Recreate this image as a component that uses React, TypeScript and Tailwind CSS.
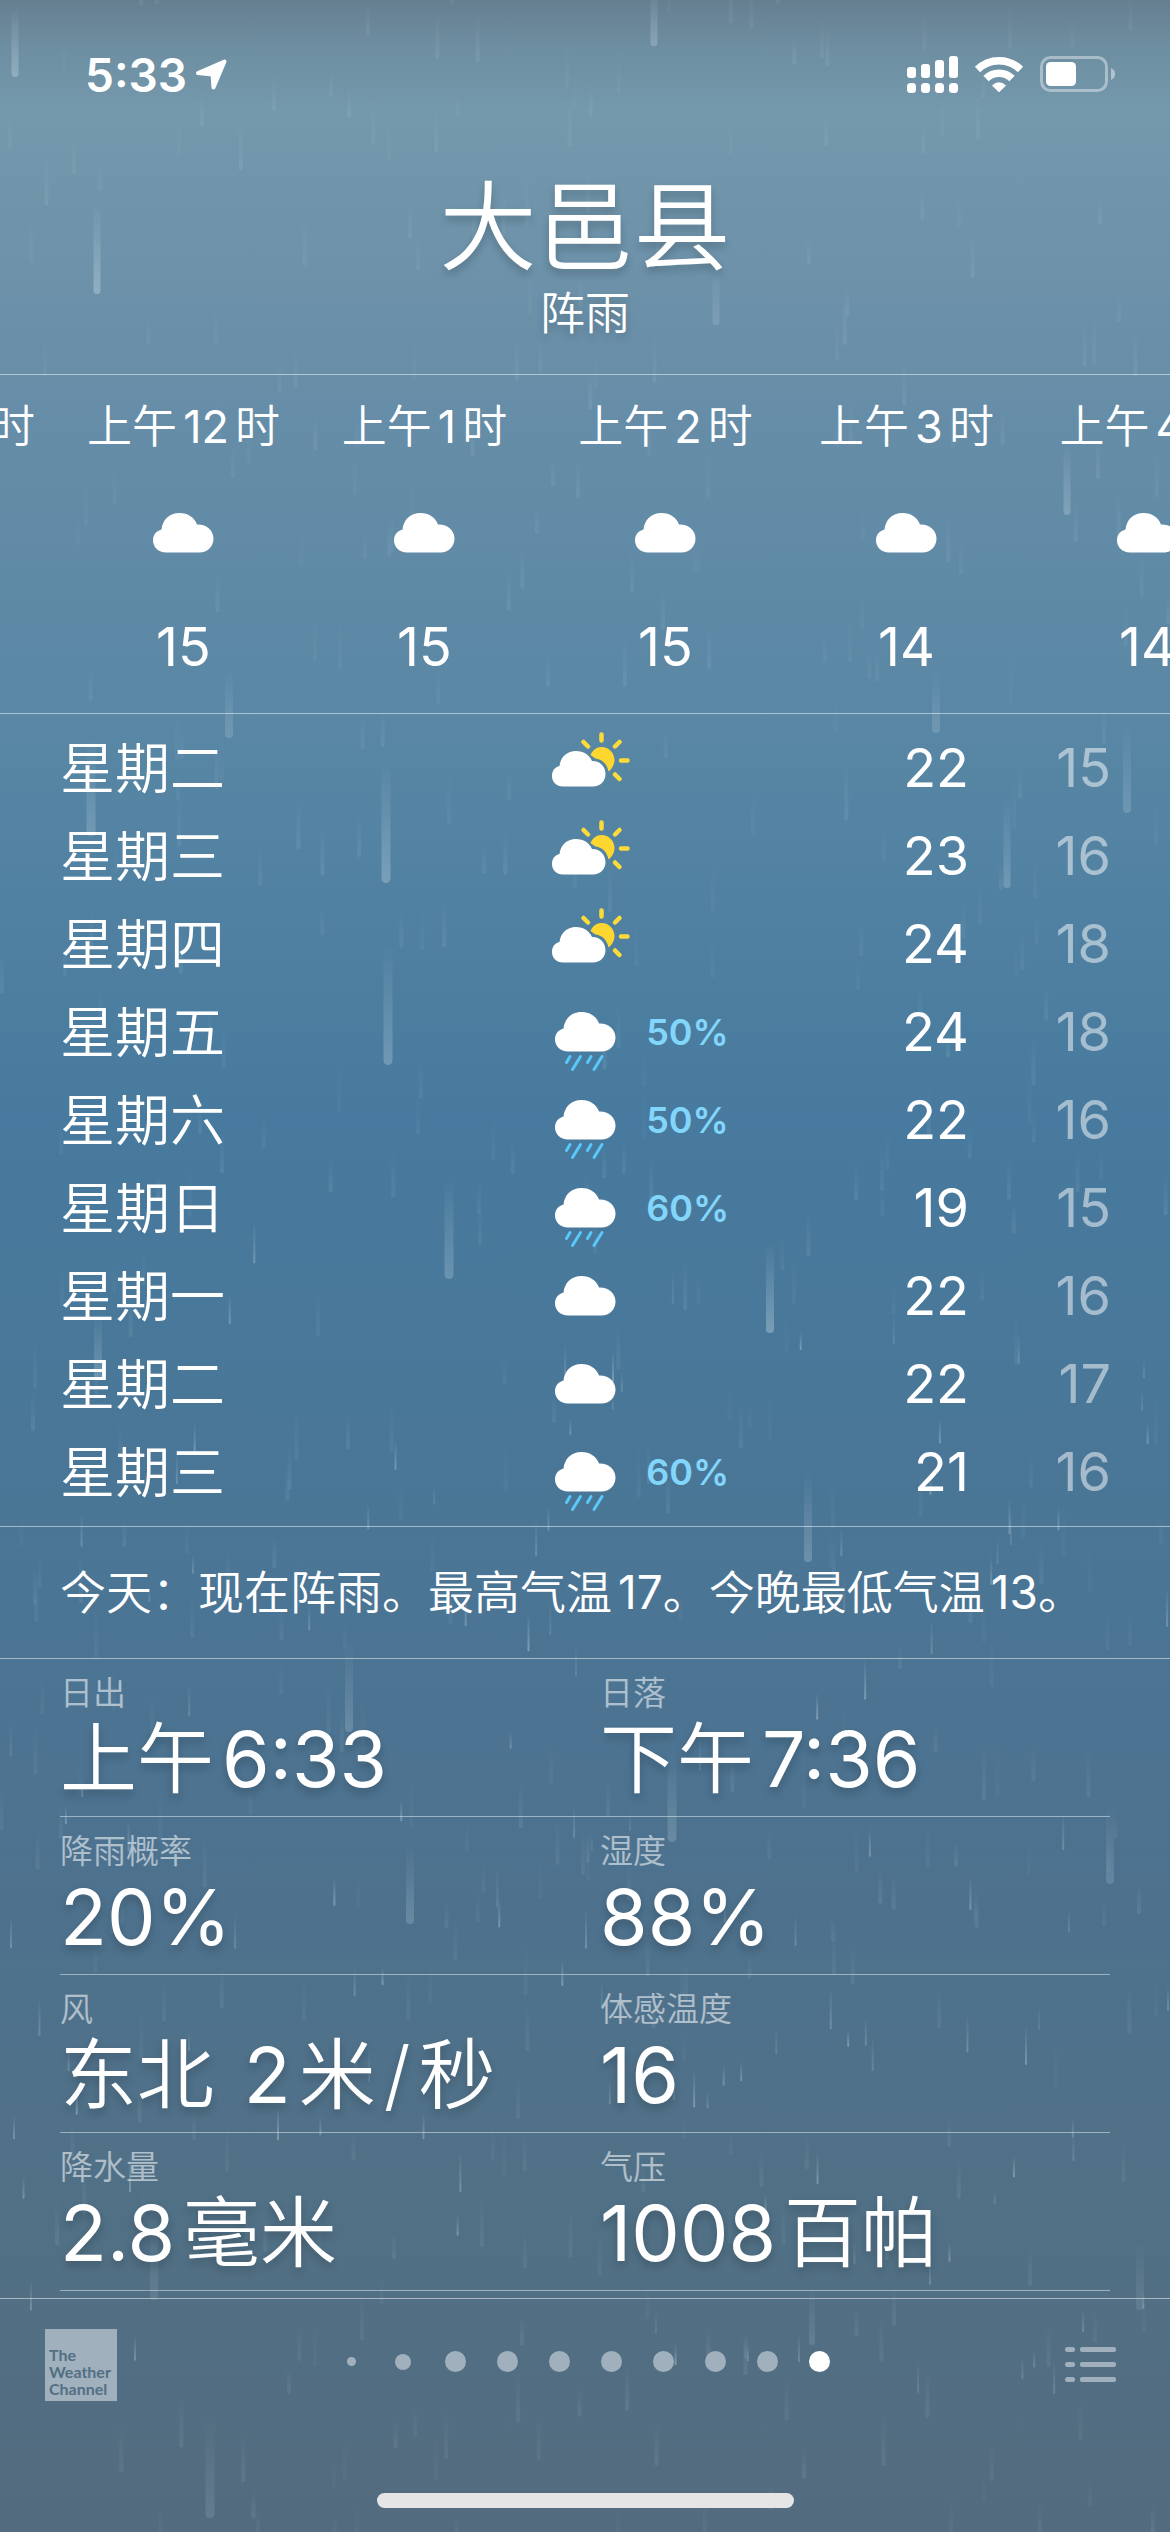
import React from "react";

type Sky = "partly" | "rain" | "cloud";

const hours = [
  { time: ["上午", "12", "时"], temp: "15" },
  { time: ["上午", "1", "时"], temp: "15" },
  { time: ["上午", "2", "时"], temp: "15" },
  { time: ["上午", "3", "时"], temp: "14" },
  { time: ["上午", "4", "时"], temp: "14" },
];

const days: { day: string; sky: Sky; chance?: string; high: number; low: number }[] = [
  { day: "星期二", sky: "partly", high: 22, low: 15 },
  { day: "星期三", sky: "partly", high: 23, low: 16 },
  { day: "星期四", sky: "partly", high: 24, low: 18 },
  { day: "星期五", sky: "rain", chance: "50%", high: 24, low: 18 },
  { day: "星期六", sky: "rain", chance: "50%", high: 22, low: 16 },
  { day: "星期日", sky: "rain", chance: "60%", high: 19, low: 15 },
  { day: "星期一", sky: "cloud", high: 22, low: 16 },
  { day: "星期二", sky: "cloud", high: 22, low: 17 },
  { day: "星期三", sky: "rain", chance: "60%", high: 21, low: 16 },
];

const details: { label: string; value: string[] }[][] = [
  [
    { label: "日出", value: ["上午", "6:33"] },
    { label: "日落", value: ["下午", "7:36"] },
  ],
  [
    { label: "降雨概率", value: ["20%"] },
    { label: "湿度", value: ["88%"] },
  ],
  [
    { label: "风", value: ["东北 ", "2", "米", "/", "秒"] },
    { label: "体感温度", value: ["16"] },
  ],
  [
    { label: "降水量", value: ["2.8", "毫米"] },
    { label: "气压", value: ["1008", "百帕"] },
  ],
];

/* Numerals carry a slightly heavier weight than the Chinese text beside them. */
function Parts({ items }: { items: string[] }) {
  return (
    <>
      {items.map((t) => (
        <span key={t} className={/[0-9]/.test(t) ? "font-normal" : "font-[350]"}>
          {t}
        </span>
      ))}
    </>
  );
}

const CLOUD =
  "M13 39.500C5.500 39.500 0 34 0 27.500C0 21.500 3.500 18 8.500 16.500C9.500 7 16 0 26.500 0C35 0 41.500 4.500 44 11.500C53 11 60.500 17 60.500 25.500C60.500 33.500 54.500 39.500 46.500 39.500Z";

function CloudIcon() {
  return (
    <svg viewBox="0 0 61 40" className="h-10 w-[61px]" aria-hidden="true">
      <path d={CLOUD} fill="#fff" />
    </svg>
  );
}

function RainIcon() {
  return (
    <svg viewBox="0 0 61 60" className="h-[60px] w-[61px]" aria-hidden="true">
      <path d={CLOUD} fill="#fff" />
      <g stroke="#5ac8fa" strokeWidth="3" strokeLinecap="round">
        <path d="M15 44.500L11.500 50.500M25.500 44.500L17.500 57.500M36 44.500L32.500 50.500M47 44.500L39 57.500" />
      </g>
    </svg>
  );
}

function PartlyIcon() {
  return (
    <svg viewBox="0 0 78 56" className="h-14 w-[78px]" aria-hidden="true">
      <path
        d="M38.500 23C40.500 18 44.500 15 49.500 15C57 15 62.500 21 62.500 28C62.500 32.500 60 37 56.500 39.500C55 32 50.500 27.500 43.500 26.500C42 25.500 40.500 24.500 38.500 23Z"
        fill="#fdd62f"
      />
      <g stroke="#fbdb3a" strokeWidth="4.500" strokeLinecap="round">
        <path d="M49.500 2.500V8.500M31.500 10L36 14.500M67.500 10L63 14.500M69 28.500H75.500M63 42.500L67.500 47" />
      </g>
      <path
        d="M11 54.500C4.500 54.500 0 50 0 44C0 38.500 3 35 7.500 34C8.500 25.500 14.500 19 24 19C31.500 19 37.500 23 40 29C47.500 28.500 53.500 34.500 53.500 42C53.500 49.500 48 54.500 41 54.500Z"
        fill="#fff"
      />
    </svg>
  );
}

const skyIcon: Record<Sky, React.ReactNode> = {
  partly: <PartlyIcon />,
  rain: <RainIcon />,
  cloud: <CloudIcon />,
};

/* Large foreground drops: x, bottom edge, length, width, opacity. */
const bigDrops: number[][] = [
  [15, 77, 70, 7, 0.34],
  [654, 46, 60, 7, 0.28],
  [97, 294, 90, 7, 0.38],
  [716, 325, 60, 7, 0.18],
  [1067, 515, 70, 7, 0.28],
  [229, 738, 70, 8, 0.2],
  [936, 733, 60, 8, 0.2],
  [91, 836, 100, 9, 0.24],
  [386, 883, 120, 9, 0.32],
  [1127, 813, 90, 8, 0.2],
  [1007, 888, 90, 7, 0.24],
  [388, 1065, 120, 9, 0.28],
  [449, 1279, 100, 9, 0.26],
  [770, 1333, 90, 8, 0.36],
  [98, 1380, 70, 8, 0.26],
  [808, 1562, 90, 8, 0.26],
  [349, 1732, 90, 8, 0.22],
  [672, 1842, 90, 9, 0.22],
  [410, 1924, 80, 8, 0.22],
  [1110, 1884, 80, 8, 0.18],
  [154, 2300, 90, 8, 0.12],
  [812, 2345, 60, 6, 0.14],
  [1140, 2310, 70, 8, 0.12],
  [210, 2518, 100, 9, 0.14],
];

function makeDrops() {
  let seed = 20417;
  const rnd = () => {
    seed = (seed * 16807) % 2147483647;
    return seed / 2147483647;
  };
  const out: number[][] = [];
  for (let i = 0; i < 460; i++) {
    out.push([rnd() * 1170, rnd() * 2560, 26 + rnd() * 28, 4, 0.04 + rnd() * 0.07]);
  }
  for (let i = 0; i < 120; i++) {
    const y = 1250 + Math.pow(rnd(), 0.8) * 1150;
    out.push([rnd() * 1170, y, 16 + rnd() * 26, 2, 0.14 + rnd() * 0.26]);
  }
  return out;
}
const smallDrops = makeDrops();

function Rain() {
  return (
    <svg
      className="pointer-events-none absolute inset-0 h-full w-full"
      viewBox="0 0 1170 2532"
      preserveAspectRatio="xMidYMin slice"
      aria-hidden="true"
    >
      <defs>
        <linearGradient id="drop" x1="0" y1="0" x2="0" y2="1">
          <stop offset="0" stopColor="#cfe0ea" stopOpacity="0" />
          <stop offset="1" stopColor="#cfe0ea" stopOpacity="1" />
        </linearGradient>
      </defs>
      {[...smallDrops, ...bigDrops].map(([x, y, len, w, o], i) => (
        <rect
          key={i}
          x={x - w / 2}
          y={y - len}
          width={w}
          height={len}
          rx={w / 2}
          fill="url(#drop)"
          opacity={o}
        />
      ))}
    </svg>
  );
}

function StatusBar() {
  return (
    <div className="flex h-[150px] items-center justify-between pr-[54px] pl-[85px]">
      <div className="flex items-center gap-2">
        <span className="text-[46px] leading-none font-semibold">5:33</span>
        <svg viewBox="0 0 32 32" className="h-8 w-8" aria-hidden="true">
          <path
            d="M29.500 2.500L18.500 28.500L17.500 15.500L3 14Z"
            fill="#fff"
            stroke="#fff"
            strokeWidth="4"
            strokeLinejoin="round"
          />
        </svg>
      </div>
      <div className="flex items-center gap-4">
        <svg viewBox="0 0 51 38" className="h-[38px] w-[51px]" fill="#fff" aria-hidden="true">
          <rect x="0" y="11" width="9" height="11" rx="3" />
          <rect x="14" y="8" width="9" height="14" rx="3" />
          <rect x="28" y="4" width="9" height="18" rx="3" />
          <rect x="42" y="0" width="9" height="22" rx="3" />
          <rect x="0" y="27" width="9" height="10" rx="3.500" />
          <rect x="14" y="27" width="9" height="10" rx="3.500" />
          <rect x="28" y="27" width="9" height="10" rx="3.500" />
          <rect x="42" y="27" width="9" height="10" rx="3.500" />
        </svg>
        <svg viewBox="0 0 50 38" className="h-[38px] w-[50px]" aria-hidden="true">
          <g fill="none" stroke="#fff" strokeWidth="7.500">
            <path d="M3.500 13.500A30.500 30.500 0 0 1 46.500 13.500" />
            <path d="M12 22.500A18.500 18.500 0 0 1 38 22.500" />
          </g>
          <path d="M18 29.500Q25 23 32 29.500L25.700 35.800Q25 36.500 24.300 35.800Z" fill="#fff" />
        </svg>
        <svg viewBox="0 0 76 38" className="h-[38px] w-[76px]" aria-hidden="true">
          <rect x="1.500" y="1.500" width="65" height="33" rx="9" fill="none" stroke="#fff" strokeOpacity="0.400" strokeWidth="3" />
          <rect x="6" y="6" width="30" height="24" rx="4.500" fill="#fff" />
          <path d="M71 12C76.500 14.500 76.500 21.500 71 24Z" fill="#fff" fillOpacity="0.450" />
        </svg>
      </div>
    </div>
  );
}

function Header() {
  return (
    <header className="flex flex-col items-center pt-[17px] pb-8 text-shadow-[0_5px_8px_rgb(0_0_0/0.2)]">
      <h1 className="text-[97px] leading-[119px] font-[350]">大邑县</h1>
      <p className="text-[45px] leading-[56px] font-[350]">阵雨</p>
    </header>
  );
}

function Hourly() {
  return (
    <section className="h-[340px] overflow-hidden border-y border-white/50">
      <ul className="flex">
        <li className="flex w-[63px] shrink-0 justify-end pt-[22px] pr-7 text-[45px] leading-[60px] font-[350]">时</li>
        {hours.map((h, i) => (
          <li key={i} className="flex w-[241px] shrink-0 flex-col items-center pt-[22px]">
            <span className="flex gap-1.5 text-[45px] leading-[60px] whitespace-nowrap">
              <Parts items={h.time} />
            </span>
            <span className="mt-[56px] flex h-10">
              <CloudIcon />
            </span>
            <span className="mt-[62px] text-[54px] leading-[64px]">{h.temp}</span>
          </li>
        ))}
      </ul>
    </section>
  );
}

function Daily() {
  return (
    <div className="py-2.5">
      <table className="w-full table-fixed border-collapse">
        <tbody>
          {days.map((d, i) => (
            <tr key={i} className="h-[88px] leading-[88px]">
              <th scope="row" className="w-[46%] pl-[60px] text-left text-[55px] font-[350]">
                {d.day}
              </th>
              <td className="w-[28%]">
                <div className="flex h-[88px] items-center">
                  <span className="flex h-full w-[92px] items-start">
                    <span className={d.sky === "partly" ? "mt-2 ml-[14px]" : "mt-6 ml-[17px]"}>
                      {skyIcon[d.sky]}
                    </span>
                  </span>
                  {d.chance && <span className="ml-4 text-[36px] font-semibold text-[#82d6fb]">{d.chance}</span>}
                </div>
              </td>
              <td className="text-right text-[54px]">{d.high}</td>
              <td className="w-[201px] pr-[59px] text-right text-[54px] text-white/50">{d.low}</td>
            </tr>
          ))}
        </tbody>
      </table>
    </div>
  );
}

function Summary() {
  return (
    <p className="flex h-[133px] items-center border-y border-white/50 px-[60px] text-[46px] font-[350] whitespace-nowrap">
      今天：现在阵雨。最高气温<span className="ml-1.5 font-normal">17</span>。今晚最低气温
      <span className="ml-1.5 font-normal">13</span>。
    </p>
  );
}

function Details() {
  return (
    <dl className="px-[60px]">
      {details.map((row, i) => (
        <div key={i} className="grid h-[158px] grid-cols-[540px_1fr] border-b border-white/45">
          {row.map((item) => (
            <div key={item.label} className="pt-[14px]">
              <dt className="text-[33px] leading-[40px] font-[350] text-white/55">{item.label}</dt>
              <dd className="flex gap-2 text-[77px] leading-[92px] whitespace-pre text-shadow-[0_5px_8px_rgb(0_0_0/0.2)]">
                <Parts items={item.value} />
              </dd>
            </div>
          ))}
        </div>
      ))}
    </dl>
  );
}

function Footer() {
  return (
    <footer className="mt-[7px] flex h-[234px] flex-col items-center border-t border-white/50">
      <div className="grid w-full grid-cols-[1fr_auto_1fr] items-start px-[45px] pt-[30px]">
        <a
          href="#weather-channel"
          className="flex h-[72px] w-[72px] flex-col justify-end bg-[#a0b0bc] pb-1 pl-1 font-['Lato',sans-serif] text-[16px] leading-[17px] font-bold text-[#526f84]"
        >
          <span>The</span>
          <span>Weather</span>
          <span>Channel</span>
        </a>
        <div className="flex items-center pt-[22px]">
          {Array.from({ length: 10 }, (_, i) => (
            <span key={i} className="flex h-[21px] w-[52px] items-center justify-center">
              <span
                className={
                  i === 0
                    ? "size-[9px] rounded-full bg-[#a0b0bc]"
                    : i === 1
                      ? "size-4 rounded-full bg-[#a0b0bc]"
                      : i === 9
                        ? "size-[21px] rounded-full bg-white"
                        : "size-[21px] rounded-full bg-[#a0b0bc]"
                }
              />
            </span>
          ))}
        </div>
        <button type="button" aria-label="城市列表" className="mt-[18px] mr-[9px] h-9 w-[51px] justify-self-end">
          <svg viewBox="0 0 51 36" className="h-9 w-[51px]" fill="#a0b0bc" aria-hidden="true">
            <rect x="0" y="0" width="10" height="5" rx="2.500" />
            <rect x="15" y="0" width="36" height="5" rx="2" />
            <rect x="0" y="15" width="10" height="5" rx="2.500" />
            <rect x="15" y="15" width="36" height="5" rx="2" />
            <rect x="0" y="30" width="10" height="5" rx="2.500" />
            <rect x="15" y="30" width="36" height="5" rx="2" />
          </svg>
        </button>
      </div>
      <div className="mt-auto mb-6 h-[15px] w-[417px] rounded-full bg-[#e5e5e5]" />
    </footer>
  );
}

export default function App() {
  return (
    <main
      lang="zh-CN"
      className="relative min-h-screen overflow-hidden bg-[linear-gradient(180deg,#667f90_0px,#6e8fa2_50px,#7498ac_110px,#688ea8_380px,#5987a5_720px,#477a9e_1120px,#4a7696_1500px,#4d728f_1850px,#517085_2250px,#546b7f_2532px)] font-['Inter','Noto_Sans_CJK_SC',sans-serif] text-white"
    >
      <Rain />
      <div className="relative">
        <StatusBar />
        <Header />
        <Hourly />
        <Daily />
        <Summary />
        <Details />
        <Footer />
      </div>
    </main>
  );
}
